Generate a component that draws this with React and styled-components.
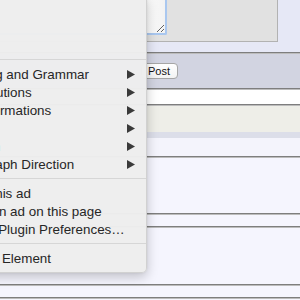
import React from "react";
import styled, { createGlobalStyle } from "styled-components";

const GlobalStyle = createGlobalStyle`
  html, body { margin: 0; padding: 0; }
  body {
    width: 300px;
    height: 300px;
    overflow: hidden;
    background: #f5f5fe;
    font-family: "Liberation Sans", Arial, sans-serif;
  }
`;

const Page = styled.div`
  position: relative;
  width: 300px;
  height: 300px;
  overflow: hidden;
  display: flex;
  flex-direction: column;
`;

const TopArea = styled.div`
  height: 52px;
  background: #e6e8f6;
  padding-right: 22px;
  display: flex;
  align-items: flex-start;
  flex-shrink: 0;
`;

const EditorBox = styled.div`
  flex: 1;
  height: 41px;
  background: #e1e1e1;
  border-right: 1px solid #b2b2b2;
  border-bottom: 1px solid #b2b2b2;
  display: flex;
  align-items: flex-start;
`;

const TextArea = styled.textarea`
  width: 167px;
  height: 35px;
  box-sizing: border-box;
  margin: 0;
  padding: 0;
  background: linear-gradient(to right, #ffffff 85%, #f2f2f2 100%);
  border: none;
  border-right: 2px solid #a9c7ef;
  border-bottom: 2px solid #a9c7ef;
  border-bottom-right-radius: 2px;
  outline: none;
  resize: both;
  font: 13px "Liberation Sans", Arial, sans-serif;
`;

const Rule = styled.div`
  height: 1px;
  flex-shrink: 0;
  border-top: 1px solid #7e7e7e;
  background: #bcbcbc;
`;

const Band = styled.div`
  flex-shrink: 0;
  height: ${(p) => p.$h}px;
  background: ${(p) => p.$bg};
  display: flex;
  align-items: center;
`;

const ButtonBar = styled(Band)`
  padding-left: 141px;
  gap: 6px;
`;

const Button = styled.button`
  height: 16px;
  box-sizing: border-box;
  padding: 0 7px 0 6px;
  margin: 0;
  border: 1px solid #a6a6a6;
  border-radius: 4px;
  background: linear-gradient(#ffffff, #f3f3f3);
  color: #111;
  font: 11px "Liberation Sans", Arial, sans-serif;
  line-height: 14px;
`;

const Menu = styled.div`
  position: absolute;
  left: -66px;
  top: -5px;
  width: 211px;
  padding: 4px 0 5px;
  background: rgba(238, 238, 238, 0.98);
  border: 1px solid rgba(0, 0, 0, 0.12);
  border-radius: 5px;
  box-shadow: 0 4px 12px rgba(0, 0, 0, 0.22), 0 0 2px rgba(0, 0, 0, 0.1);
  font-family: "Liberation Sans", Arial, sans-serif;
  font-size: 13.4px;
  color: #262626;
`;

const Item = styled.div`
  height: 18px;
  display: flex;
  align-items: center;
  padding: 0 11px 0 20px;
  white-space: nowrap;
`;

const Label = styled.span`
  flex: 1;
`;

const Separator = styled.div`
  height: 1px;
  margin: 5px 0;
  background: #d6d6d6;
`;

const Arrow = () => (
  <svg width="8" height="9" viewBox="0 0 8 9">
    <polygon points="0,0 8,4.5 0,9" fill="#3a3a3a" />
  </svg>
);

const groups = [
  [
    { label: "Cut" },
    { label: "Copy" },
    { label: "Paste" },
  ],
  [
    { label: "Spelling and Grammar", sub: true },
    { label: "Substitutions", sub: true },
    { label: "Transformations", sub: true },
    { label: "Font", sub: true },
    { label: "Speech", sub: true },
    { label: "Paragraph Direction", sub: true },
  ],
  [
    { label: "Block this ad" },
    { label: "Block an ad on this page" },
    { label: "ClickToPlugin Preferences…" },
  ],
  [{ label: "Inspect Element" }],
];

export default function App() {
  return (
    <Page>
      <GlobalStyle />
      <TopArea>
        <EditorBox>
          <TextArea defaultValue="" />
        </EditorBox>
      </TopArea>
      <Rule />
      <ButtonBar $h={34} $bg="#d2d4e1">
        <Button>Post</Button>
      </ButtonBar>
      <Rule />
      <Band $h={14} $bg="#ffffff" />
      <Rule />
      <Band $h={26} $bg="#eeeee8" />
      <Band $h={6} $bg="#dcdee9" />
      <Band $h={18} $bg="#f4f4fc" />
      <Rule />
      <Band $h={55} $bg="#f5f5fe" />
      <Rule />
      <Band $h={11} $bg="#f5f5fe" />
      <Rule />
      <Band $h={56} $bg="#f5f5fe" />
      <Rule />
      <Band $h={11} $bg="#f5f5fe" />
      <Rule />
      <Menu>
        {groups.map((g, gi) => (
          <React.Fragment key={gi}>
            {gi > 0 && <Separator />}
            {g.map((it) => (
              <Item key={it.label}>
                <Label>{it.label}</Label>
                {it.sub && <Arrow />}
              </Item>
            ))}
          </React.Fragment>
        ))}
      </Menu>
    </Page>
  );
}
